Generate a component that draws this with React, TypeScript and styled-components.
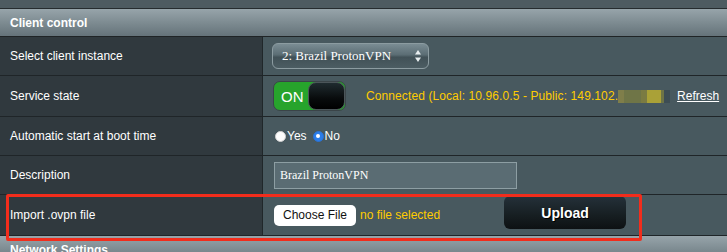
import React from 'react';
import styled, { createGlobalStyle } from 'styled-components';

const GlobalStyle = createGlobalStyle`
    html, body {
        margin: 0;
        padding: 0;
        background: #4e5b61;
        font-family: 'Liberation Sans', Arial, sans-serif;
    }
`;

const Page = styled.div`
    width: 727px;
    height: 252px;
    overflow: hidden;
    padding-top: 8px;
    box-sizing: border-box;
`;

const Panel = styled.div`
    border-top: 1px solid #262c2f;
`;

const SectionHeader = styled.div<{ $height: number }>`
    height: ${(p) => p.$height}px;
    display: flex;
    align-items: center;
    padding-left: 10px;
    background: linear-gradient(to bottom, #97a4aa 0%, #7b898f 55%, #65737a 100%);
    border-bottom: 1px solid #1f2426;
    color: #fff;
    font-size: 12px;
    font-weight: bold;
`;

const Row = styled.div<{ $height: number }>`
    position: relative;
    display: grid;
    grid-template-columns: 263px 1fr;
    height: ${(p) => p.$height}px;
    border-bottom: 1px solid #1f2528;
`;

const Label = styled.div`
    display: flex;
    align-items: center;
    padding-left: 10px;
    background: #30393e;
    border-right: 1px solid #20272a;
    color: #fff;
    font-size: 12px;
`;

const Value = styled.div`
    display: flex;
    align-items: center;
    padding-left: 10px;
    background: #48595f;
    color: #fff;
    font-size: 12px;
`;

const SelectBox = styled.div`
    width: 157px;
    height: 26px;
    margin-left: -1px;
    box-sizing: border-box;
    display: flex;
    align-items: center;
    justify-content: space-between;
    padding: 0 6px 0 9px;
    border: 1px solid #8c9ca1;
    border-radius: 6px;
    background: linear-gradient(to bottom, #7b8d94 0%, #5b6d74 45%, #415157 55%, #4c5d63 100%);
    color: #fff;
    font-family: 'Liberation Serif', 'Times New Roman', serif;
    font-size: 13px;
`;

const Toggle = styled.div`
    width: 73px;
    height: 30px;
    box-sizing: border-box;
    display: flex;
    border: 1px solid #3a4448;
    border-radius: 7px;
    overflow: hidden;
    background: #27a42c;
`;

const ToggleOn = styled.div`
    flex: 1;
    display: flex;
    align-items: center;
    padding-left: 7px;
    color: #fff;
    font-size: 15px;
`;

const Knob = styled.div`
    width: 37px;
    border-radius: 8px;
    border: 1px solid #4b5559;
    box-sizing: border-box;
    background: linear-gradient(to bottom, #1f2b2f 0%, #080b0c 60%, #000 100%);
`;

const Status = styled.span`
    margin-left: 20px;
    color: #ffcc00;
    font-size: 12px;
    letter-spacing: 0.1px;
`;

const Blur = styled.span`
    display: flex;
    height: 13px;
`;

const BlurCell = styled.span<{ $w: number; $c: string }>`
    width: ${(p) => p.$w}px;
    background: ${(p) => p.$c};
`;

const RefreshLink = styled.a`
    margin-left: 7px;
    color: #fff;
    text-decoration: underline;
    font-size: 12px;
`;

const RadioGroup = styled.div`
    display: flex;
    align-items: center;
    padding-left: 2px;
`;

const Radio = styled.span<{ $checked?: boolean }>`
    width: 11px;
    height: 11px;
    border-radius: 50%;
    box-sizing: border-box;
    background: ${(p) => (p.$checked ? '#2b7de9' : '#fdfdfd')};
    border: 1px solid ${(p) => (p.$checked ? '#2a72d4' : '#d0d0d0')};
    display: flex;
    align-items: center;
    justify-content: center;
    margin-right: 1px;
    &::after {
        content: '';
        width: 4px;
        height: 4px;
        border-radius: 50%;
        background: #fff;
        display: ${(p) => (p.$checked ? 'block' : 'none')};
    }
`;

const RadioText = styled.span`
    color: #fff;
    font-size: 12px;
    margin-right: 6px;
`;

const TextField = styled.div`
    width: 243px;
    height: 27px;
    margin-left: 1px;
    box-sizing: border-box;
    display: flex;
    align-items: center;
    padding-left: 5px;
    background: #5a6c73;
    border: 1px solid #8d9ea3;
    color: #fff;
    font-family: 'Liberation Serif', 'Times New Roman', serif;
    font-size: 12px;
`;

const ChooseButton = styled.div`
    width: 82px;
    height: 21px;
    margin-left: 1px;
    box-sizing: border-box;
    display: flex;
    align-items: center;
    justify-content: center;
    background: #fff;
    border-radius: 5px;
    color: #111;
    font-size: 12px;
`;

const NoFile = styled.span`
    margin-left: 4px;
    color: #ffcc00;
    font-size: 12px;
`;

const UploadButton = styled.div`
    width: 122px;
    height: 33px;
    margin-left: 64px;
    margin-top: -5px;
    display: flex;
    align-items: center;
    justify-content: center;
    border-radius: 6px;
    background: linear-gradient(to bottom, #25313a 0%, #161e21 60%, #0d1113 100%);
    color: #fff;
    font-size: 14px;
    font-weight: bold;
    text-shadow: 1px 1px 0 #000;
`;

const Highlight = styled.div`
    position: absolute;
    left: 6px;
    top: -1px;
    width: 636px;
    height: 47px;
    box-sizing: border-box;
    border: 3px solid #f22d1c;
    border-radius: 2px;
    pointer-events: none;
`;

const blurCells = [
    { w: 6, c: '#7f7e4a' },
    { w: 17, c: '#6f7547' },
    { w: 6, c: '#7b7b42' },
    { w: 14, c: '#aaa137' },
    { w: 3, c: '#6e7446' },
    { w: 6, c: '#3d4d54' },
];

function Arrows() {
    return (
        <svg width="8" height="14" viewBox="0 0 8 14">
            <path d="M4 1 L7 5.5 H1 Z" fill="#e8eef0" />
            <path d="M4 13 L7 8.5 H1 Z" fill="#e8eef0" />
        </svg>
    );
}

export default function App() {
    return (
        <Page>
            <GlobalStyle />
            <Panel>
                <SectionHeader $height={27}>Client control</SectionHeader>
                <Row $height={38}>
                    <Label>Select client instance</Label>
                    <Value>
                        <SelectBox>
                            <span>2: Brazil ProtonVPN</span>
                            <Arrows />
                        </SelectBox>
                    </Value>
                </Row>
                <Row $height={40}>
                    <Label>Service state</Label>
                    <Value>
                        <Toggle>
                            <ToggleOn>ON</ToggleOn>
                            <Knob />
                        </Toggle>
                        <Status>Connected (Local: 10.96.0.5 - Public: 149.102.</Status>
                        <Blur>
                            {blurCells.map((b, i) => (
                                <BlurCell key={i} $w={b.w} $c={b.c} />
                            ))}
                        </Blur>
                        <RefreshLink>Refresh</RefreshLink>
                    </Value>
                </Row>
                <Row $height={38}>
                    <Label>Automatic start at boot time</Label>
                    <Value>
                        <RadioGroup>
                            <Radio />
                            <RadioText>Yes</RadioText>
                            <Radio $checked />
                            <RadioText>No</RadioText>
                        </RadioGroup>
                    </Value>
                </Row>
                <Row $height={38}>
                    <Label>Description</Label>
                    <Value>
                        <TextField>Brazil ProtonVPN</TextField>
                    </Value>
                </Row>
                <Row $height={40}>
                    <Label>Import .ovpn file</Label>
                    <Value>
                        <ChooseButton>Choose File</ChooseButton>
                        <NoFile>no file selected</NoFile>
                        <UploadButton>Upload</UploadButton>
                    </Value>
                    <Highlight />
                </Row>
                <SectionHeader $height={27}>Network Settings</SectionHeader>
            </Panel>
        </Page>
    );
}
